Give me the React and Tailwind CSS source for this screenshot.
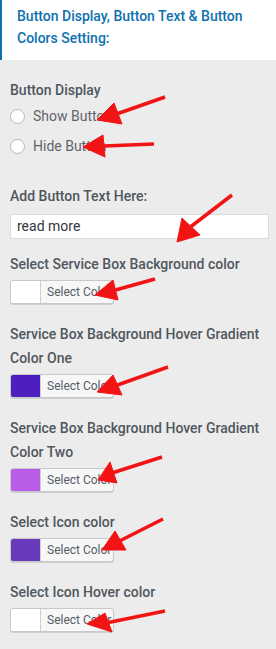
import React from 'react';

const arrows = [
  { tail: [165, 97], tip: [97, 120], a: [114, 103], b: [122, 124] },
  { tail: [154, 144], tip: [83, 147], a: [103, 135], b: [105, 157] },
  { tail: [232, 195], tip: [177, 242], a: [182, 218], b: [200, 235] },
  { tail: [155, 279], tip: [95, 295], a: [113, 280], b: [118, 300] },
  { tail: [168, 367], tip: [97, 392], a: [113, 375], b: [122, 395] },
  { tail: [162, 457], tip: [98, 480], a: [110, 462], b: [117, 483] },
  { tail: [163, 519], tip: [102, 550], a: [115, 531], b: [126, 550] },
  { tail: [165, 611], tip: [87, 624], a: [105, 613], b: [112, 632] },
];

const Label = ({ children }) => (
  <div className="text-[14px] leading-6 font-medium text-[#50575e]">{children}</div>
);

const ColorButton = ({ color }) => (
  <div className="mt-1 flex h-6 w-[104px] items-stretch rounded-[3px] border border-[#c8c8c8] bg-[#f7f7f7] shadow-[0_1px_0_#cfcfcf]">
    <span className="w-[30px] rounded-l-[2px] border-r border-[#cfcfcf]" style={{ backgroundColor: color }} />
    <span className="flex items-center pl-[6px] text-[12px] text-[#555d66]">Select Color</span>
  </div>
);

const Radio = ({ label }) => (
  <label className="flex h-6 items-center gap-[8px] text-[14px] text-[#5f656b]">
    <span className="h-[15px] w-[15px] rounded-full border border-[#b4b9be] bg-white" />
    {label}
  </label>
);

export default function App() {
  return (
    <div className="relative h-[649px] w-[276px] overflow-hidden bg-[#ececec] font-['Roboto',sans-serif]">
      <div className="h-[60px] border-l-[2px] border-[#0e71ae] bg-white pl-[15px] pt-[5px] text-[14px] leading-[22px] font-medium text-[#0e71ae]">
        Button Display, Button Text &amp; Button Colors Setting:
      </div>

      <div className="px-[10px] pt-[18px]">
        <Label>Button Display</Label>
        <div className="mt-[2px] flex flex-col gap-[6px]">
          <Radio label="Show Button" />
          <Radio label="Hide Button" />
        </div>

        <div className="mt-[26px]">
          <Label>Add Button Text Here:</Label>
          <div className="mt-[6px] flex h-[25px] w-[259px] items-center border border-[#dcdcdc] bg-white pl-[6px] text-[14px] text-[#32373c]">
            read more
          </div>
        </div>

        <div className="mt-[13px]">
          <Label>Select Service Box Background color</Label>
          <ColorButton color="#ffffff" />
        </div>

        <div className="mt-[18px]">
          <Label>Service Box Background Hover Gradient<br />Color One</Label>
          <ColorButton color="#4c1fbe" />
        </div>

        <div className="mt-[18px]">
          <Label>Service Box Background Hover Gradient<br />Color Two</Label>
          <ColorButton color="#b95de8" />
        </div>

        <div className="mt-[18px]">
          <Label>Select Icon color</Label>
          <ColorButton color="#673bbb" />
        </div>

        <div className="mt-[18px]">
          <Label>Select Icon Hover color</Label>
          <ColorButton color="#ffffff" />
        </div>
      </div>

      {/* annotation arrows */}
      <svg className="pointer-events-none absolute left-0 top-0" width="276" height="649">
        {arrows.map((ar, i) => {
          const mx = (ar.a[0] + ar.b[0]) / 2;
          const my = (ar.a[1] + ar.b[1]) / 2;
          return (
            <g key={i} fill="#f21414" stroke="#f21414">
              <line x1={ar.tail[0]} y1={ar.tail[1]} x2={mx} y2={my} strokeWidth="3.5" />
              <polygon points={`${ar.tip[0]},${ar.tip[1]} ${ar.a[0]},${ar.a[1]} ${ar.b[0]},${ar.b[1]}`} strokeWidth="1" />
            </g>
          );
        })}
      </svg>
    </div>
  );
}
